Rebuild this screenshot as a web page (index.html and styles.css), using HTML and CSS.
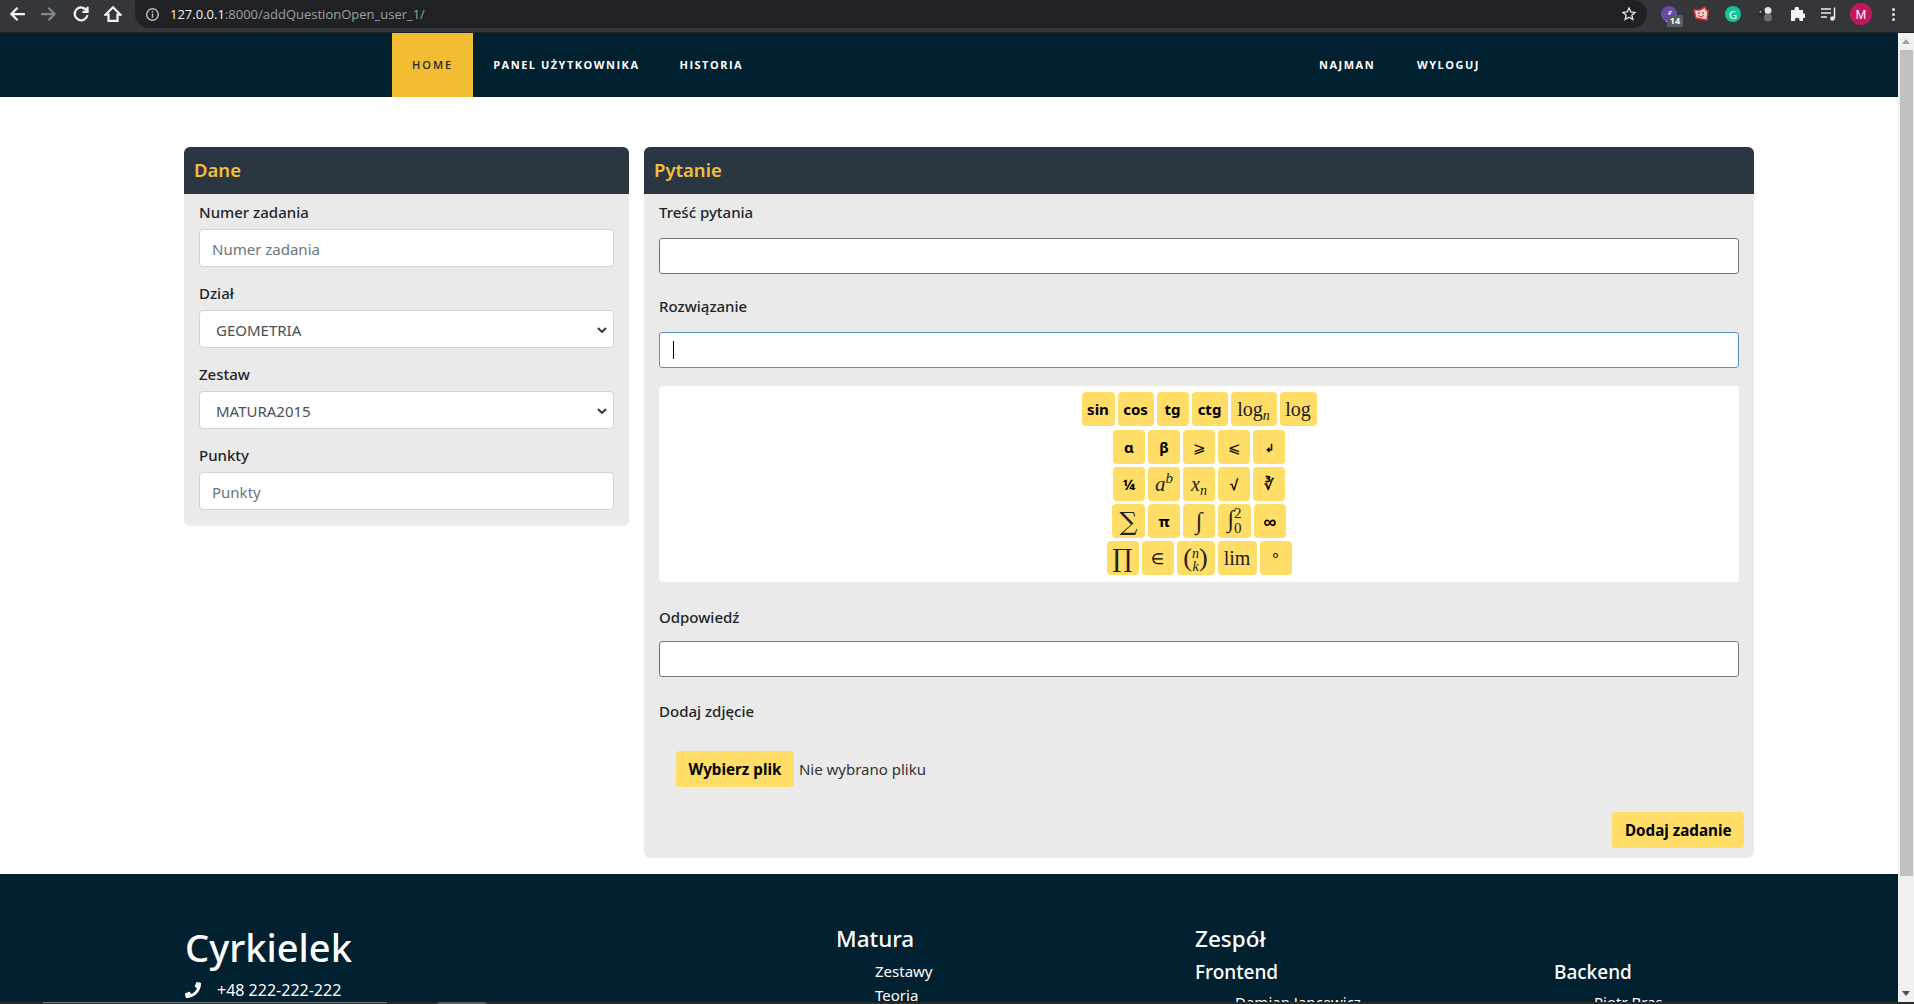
FILE: index.html
```html
<!DOCTYPE html>
<html lang="pl">
  <head>
    <meta charset="UTF-8" />
    <title>Cyrkielek - dodaj zadanie</title>
    <link rel="stylesheet" href="styles.css">
  </head>

  <body>
    <div class="browser">
      <div class="toolbar">
        <svg class="tool-icon" viewBox="0 0 16 16"><path d="M15 8H3M8.500 2.500 3 8l5.500 5.500" /></svg>
        <svg class="tool-icon tool-off" viewBox="0 0 16 16"><path d="M1 8h12M7.500 2.500 13 8l-5.500 5.500" /></svg>
        <svg class="tool-icon" viewBox="0 0 16 16"><path d="M13 5A5.700 5.700 0 1 0 13.700 9M13.800 1.500V6H9.300" /></svg>
        <svg class="tool-icon" viewBox="0 0 16 16"><path d="M8 2 1.500 8.500h2.500V14h8V8.500h2.500Z" /></svg>
        <div class="omnibox">
          <svg class="info" viewBox="0 0 16 16"><circle cx="8" cy="8" r="6.200" /><path d="M8 7v4.500M8 4.300v1.500" /></svg>
          <span class="url"><b>127.0.0.1</b>:8000/addQuestionOpen_user_1/</span>
          <svg class="star" viewBox="0 0 16 16"><path d="m8 2 1.800 4 4.200.4-3.200 2.800 1 4.300L8 11.200 4.200 13.500l1-4.300L2 6.400 6.200 6Z" /></svg>
        </div>
        <div class="extensions">
          <span class="ext ext-purple"><i>f</i><em>14</em></span>
          <svg class="ext-svg" viewBox="0 0 16 16"><path fill="#f6d5cf" stroke="#d9343c" stroke-width="1.500" d="M1 4 7 4 12 1l1 3 2 1-1 9-11-2Z" /><circle cx="6" cy="7" r="1" fill="#d9343c" /><circle cx="10" cy="7" r="1" fill="#d9343c" /><path d="M5 9.500q3 2.500 6 0" fill="none" stroke="#d9343c" /></svg>
          <span class="ext ext-green">G</span>
          <svg class="ext-svg" viewBox="0 0 16 16"><circle cx="11" cy="4.500" r="3.500" fill="#e6e6e6" /><circle cx="11" cy="11.500" r="4" fill="#6e6e6e" /><circle cx="4.500" cy="7" r="3.500" fill="#2b2b2b" /><circle cx="3.500" cy="5.800" r="1" fill="#bbb" /></svg>
          <svg class="ext-svg" viewBox="0 0 16 16"><path fill="#f1f3f4" d="M2 4h3.500V3a2.300 2.300 0 0 1 4.600 0v1H14v3.500h1a2.300 2.300 0 0 1 0 4.600h-1V15H10.500v-1a2.300 2.300 0 0 0-4.600 0v1H2Z" /></svg>
          <svg class="ext-svg" viewBox="0 0 16 16"><path fill="none" stroke="#e8eaed" stroke-width="1.500" d="M0 3h10M0 7h10M0 11h6M13.500 1.500v10.500" /><circle cx="11.500" cy="12.500" r="2.300" fill="#e8eaed" /></svg>
          <span class="avatar">M</span>
          <span class="kebab"><i></i><i></i><i></i></span>
        </div>
      </div>

      <div class="viewport">
        <div class="page">
          <nav class="nav">
            <div class="nav-group">
              <a class="nav-link nav-active">Home</a>
              <a class="nav-link">Panel użytkownika</a>
              <a class="nav-link">Historia</a>
            </div>
            <div class="nav-group nav-user">
              <a class="nav-link">Najman</a>
              <a class="nav-link">Wyloguj</a>
            </div>
          </nav>

          <main class="content">
            <section class="panel panel-side">
              <h2 class="panel-title">Dane</h2>
              <form class="panel-body side-form">
                <label class="side-label">Numer zadania</label>
                <input class="side-input" placeholder="Numer zadania" />
                <label class="side-label">Dział</label>
                <div class="side-input side-select"><span>GEOMETRIA</span><svg viewBox="0 0 10 6"><path d="m1 1 4 4 4-4" /></svg></div>
                <label class="side-label">Zestaw</label>
                <div class="side-input side-select"><span>MATURA2015</span><svg viewBox="0 0 10 6"><path d="m1 1 4 4 4-4" /></svg></div>
                <label class="side-label">Punkty</label>
                <input class="side-input" placeholder="Punkty" />
              </form>
            </section>

            <section class="panel panel-main">
              <h2 class="panel-title">Pytanie</h2>
              <form class="panel-body main-form">
                <label class="main-label">Treść pytania</label>
                <div class="main-input"></div>
                <label class="main-label">Rozwiązanie</label>
                <div class="main-input main-focus"><span class="caret"></span></div>
                <div class="math-box">
                  <div class="math-row math-row-first">
                    <button type="button" class="math-btn w33">sin</button>
                    <button type="button" class="math-btn w36">cos</button>
                    <button type="button" class="math-btn w32">tg</button>
                    <button type="button" class="math-btn w36">ctg</button>
                    <button type="button" class="math-btn tex w46">log<sub>n</sub></button>
                    <button type="button" class="math-btn tex w37">log</button>
                  </div>
                  <div class="math-row">
                    <button type="button" class="math-btn w32">α</button>
                    <button type="button" class="math-btn w32">β</button>
                    <button type="button" class="math-btn w32 thin">⩾</button>
                    <button type="button" class="math-btn w32 thin">⩽</button>
                    <button type="button" class="math-btn w32 small">↲</button>
                  </div>
                  <div class="math-row">
                    <button type="button" class="math-btn w32">¼</button>
                    <button type="button" class="math-btn tex w32 pow"><i>a</i><sup><i>b</i></sup></button>
                    <button type="button" class="math-btn tex w32"><i>x</i><sub>n</sub></button>
                    <button type="button" class="math-btn w32">√</button>
                    <button type="button" class="math-btn w32">∛</button>
                  </div>
                  <div class="math-row">
                    <button type="button" class="math-btn tex w33 big">∑</button>
                    <button type="button" class="math-btn w32">π</button>
                    <button type="button" class="math-btn tex w32 big-int"><i>∫</i></button>
                    <button type="button" class="math-btn tex w33 big-int"><i>∫</i><span class="limits"><small>2</small><small>0</small></span></button>
                    <button type="button" class="math-btn w32 large">∞</button>
                  </div>
                  <div class="math-row">
                    <button type="button" class="math-btn tex w32 big">∏</button>
                    <button type="button" class="math-btn w32 thin">∈</button>
                    <button type="button" class="math-btn tex w38 binom">(<span class="limits"><small><i>n</i></small><small><i>k</i></small></span>)</button>
                    <button type="button" class="math-btn tex w39">lim</button>
                    <button type="button" class="math-btn w32 thin">°</button>
                  </div>
                </div>
                <label class="main-label answer-label">Odpowiedź</label>
                <div class="main-input answer-input"></div>
                <label class="main-label">Dodaj zdjęcie</label>
                <div class="file-row">
                  <button type="button" class="yellow-btn">Wybierz plik</button>
                  <span>Nie wybrano pliku</span>
                </div>
                <div class="submit-row">
                  <button type="button" class="yellow-btn">Dodaj zadanie</button>
                </div>
              </form>
            </section>
          </main>

          <footer class="footer">
            <div class="footer-brand">
              <h2>Cyrkielek</h2>
              <p class="phone">
                <svg viewBox="0 0 512 512"><path d="M493 24 389 0c-11-3-23 3-27 14l-48 112c-4 10-1 21 7 28l61 50c-36 76-98 139-176 176l-50-61c-7-8-18-11-28-7L14 360c-11 5-17 17-14 28l24 104c3 11 12 20 24 20 256 0 464-207 464-464 0-12-8-21-19-24Z" /></svg>
                +48 222-222-222
              </p>
            </div>
            <div class="footer-col">
              <h3>Matura</h3>
              <ul>
                <li>Zestawy</li>
                <li>Teoria</li>
              </ul>
            </div>
            <div class="footer-team">
              <h3>Zespół</h3>
              <div class="team-grid">
                <div>
                  <h4>Frontend</h4>
                  <ul><li>Damian Jancewicz</li></ul>
                </div>
                <div>
                  <h4>Backend</h4>
                  <ul><li>Piotr Bras</li></ul>
                </div>
              </div>
            </div>
          </footer>
        </div>

        <div class="scrollbar">
          <span class="arrow-up"></span>
          <span class="thumb"></span>
          <span class="arrow-down"></span>
        </div>
      </div>
      <div class="taskbar"><span class="task task-a"></span><span class="task task-b"></span></div>
    </div>
  </body>
</html>
```

FILE: styles.css
```css
* {
  box-sizing: border-box;
}
html,
body {
  margin: 0;
  height: 100%;
  overflow: hidden;
}
body {
  background: #fff;
  color: #212529;
  font-family: "Noto Sans", "Open Sans", Arial, sans-serif;
}
.browser {
  display: flex;
  flex-direction: column;
  height: 1004px;
}

/* browser bar */
.toolbar {
  display: flex;
  align-items: center;
  height: 33px;
  flex: none;
  padding: 0 0 4px 8px;
  gap: 10px;
  border-bottom: 1px solid #202124;
  background: #35363a;
}
.tool-icon {
  width: 18px;
  height: 18px;
  margin-right: 4px;
  fill: none;
  stroke: #f1f3f4;
  stroke-width: 2;
}
.tool-off {
  stroke: #80868b;
}
.omnibox {
  display: flex;
  align-items: center;
  width: 1512px;
  height: 28px;
  margin-left: -1px;
  padding: 0 10px;
  border-radius: 0 14px 14px 14px;
  background: #202124;
}
.info {
  width: 15px;
  height: 15px;
  fill: none;
  stroke: #bdc1c6;
  stroke-width: 1.500;
}
.url {
  margin-left: 10px;
  font-family: "Open Sans", sans-serif;
  font-size: 13px;
  color: #9aa0a6;
}
.url b {
  font-weight: 400;
  color: #f1f3f4;
}
.star {
  width: 16px;
  height: 16px;
  margin-left: auto;
  fill: none;
  stroke: #e8eaed;
  stroke-width: 1.300;
}
.extensions {
  display: flex;
  align-items: center;
  gap: 16px;
  margin-left: 4px;
}
.ext {
  position: relative;
  display: flex;
  align-items: center;
  justify-content: center;
  width: 16px;
  height: 16px;
  border-radius: 50%;
  font-size: 11px;
  color: #fff;
}
.ext-purple {
  background: #6a4aa5;
}
.ext-purple em {
  position: absolute;
  left: 6px;
  top: 9px;
  width: 16px;
  height: 12px;
  border-radius: 1px;
  background: #5a5b5e;
  font-size: 9px;
  font-style: normal;
  font-weight: 700;
  line-height: 12px;
  text-align: center;
}
.ext-green {
  background: #15c39a;
}
.ext-svg {
  width: 16px;
  height: 16px;
}
.avatar {
  display: flex;
  align-items: center;
  justify-content: center;
  width: 22px;
  height: 22px;
  margin: 0 -3px;
  border-radius: 50%;
  background: #c2185b;
  color: #fff;
  font-size: 12px;
}
.kebab {
  display: flex;
  flex-direction: column;
  align-items: center;
  gap: 2px;
  width: 16px;
}
.kebab i {
  width: 3px;
  height: 3px;
  border-radius: 50%;
  background: #e8eaed;
}

/* page + scrollbar */
.viewport {
  display: flex;
  flex: 1;
  min-height: 0;
}
.page {
  flex: 1;
  min-width: 0;
  overflow: hidden;
}
.scrollbar {
  position: relative;
  flex: none;
  width: 16px;
  background: #f1f1f1;
}
.thumb {
  position: absolute;
  left: 2px;
  right: 1px;
  top: 17px;
  height: 826px;
  background: #c1c1c1;
}
.arrow-up,
.arrow-down {
  position: absolute;
  left: 4px;
  border-left: 4px solid transparent;
  border-right: 4px solid transparent;
}
.arrow-up {
  top: 6px;
  border-bottom: 5px solid #a3a3a3;
}
.arrow-down {
  bottom: 6px;
  border-top: 5px solid #505050;
}
.taskbar {
  display: flex;
  flex: none;
  height: 2px;
  background: #2a2b26;
}
.task {
  height: 2px;
}
.task-a {
  width: 344px;
  margin-left: 43px;
  border-top: 1px solid #777;
  background: #333;
}
.task-b {
  width: 48px;
  margin-left: 51px;
  background: #5a5a5a;
}

/* top nav */
.nav {
  display: flex;
  justify-content: space-between;
  height: 64px;
  padding: 0 397px 0 392px;
  background: #012030;
}
.nav-group {
  display: flex;
}
.nav-link {
  display: flex;
  align-items: center;
  padding: 0 20px 2px;
  color: #fff;
  font-family: "Open Sans", sans-serif;
  font-size: 11px;
  font-weight: 700;
  letter-spacing: 1.500px;
  text-transform: uppercase;
}
.nav-user .nav-link {
  padding: 0 21px 2px;
}
.nav-active {
  background: #f2bd33;
  color: #1f2a30;
  font-weight: 600;
  letter-spacing: 2px;
}

/* panels */
.content {
  display: flex;
  align-items: flex-start;
  gap: 15px;
  padding: 50px 144px 16px 184px;
}
.panel {
  border-radius: 6px;
  background: #eaeaea;
  overflow: hidden;
}
.panel-side {
  flex: none;
  width: 445px;
}
.panel-main {
  flex: 1;
}
.panel-title {
  height: 47px;
  margin: 0;
  padding-left: 10px;
  background: #2b3643;
  color: #f5bf3c;
  font-size: 18.500px;
  font-weight: 600;
  line-height: 46px;
}
.side-form {
  padding: 5px 15px 16px;
}
.side-label {
  display: block;
  height: 30px;
  font-size: 15px;
  font-weight: 500;
  line-height: 26px;
}
.side-input {
  display: block;
  width: 100%;
  height: 38px;
  margin-bottom: 13px;
  padding: 2px 12px 0;
  border: 1px solid #ced4da;
  border-radius: 4px;
  background: #fff;
  color: #495057;
  font-family: inherit;
  font-size: 15px;
}
.side-input::placeholder {
  color: #6c757d;
  opacity: 1;
}
.side-input:last-child {
  margin-bottom: 0;
}
.side-select {
  display: flex;
  align-items: center;
  justify-content: space-between;
  padding: 1px 6px 0 16px;
}
.side-select svg {
  width: 10px;
  height: 6px;
  fill: none;
  stroke: #343a40;
  stroke-width: 2;
}

/* question form */
.main-form {
  padding: 6px 15px 10px;
}
.main-label {
  display: block;
  height: 38px;
  font-size: 15px;
  font-weight: 500;
  line-height: 24px;
}
.main-input {
  display: flex;
  align-items: center;
  height: 36px;
  margin-bottom: 20px;
  padding-left: 13px;
  border: 1px solid #767676;
  border-radius: 3px;
  background: #fff;
}
.main-focus {
  margin-bottom: 18px;
  border-color: #5b8fc9;
}
.answer-input {
  margin-bottom: 22px;
}
.caret {
  width: 1px;
  height: 18px;
  background: #000;
}
.math-box {
  display: flex;
  flex-direction: column;
  gap: 3px;
  height: 196px;
  margin-bottom: 23px;
  padding-top: 6px;
  border-radius: 3px;
  background: #fff;
}
.math-row {
  display: flex;
  justify-content: center;
  gap: 3px;
}
.math-row-first {
  margin-bottom: 1px;
}
.math-btn {
  height: 34px;
  padding: 0;
  border: 0;
  border-radius: 4px;
  background: #ffdd67;
  color: #000;
  font-family: "Noto Sans", sans-serif;
  font-size: 15px;
  font-weight: 700;
  white-space: nowrap;
}
.w32 { width: 32px; }
.w33 { width: 33px; }
.w36 { width: 36px; }
.w37 { width: 37px; }
.w38 { width: 38px; }
.w39 { width: 39px; }
.w46 { width: 46px; }
.thin {
  font-weight: 400;
}
.small {
  font-size: 11px;
}
.large {
  font-size: 18px;
}
.tex {
  color: #222;
  font-family: "Liberation Serif", serif;
  font-size: 20px;
  font-weight: 400;
}
.tex sub,
.tex sup {
  font-size: 14px;
  line-height: 0;
}
.tex sub {
  font-style: italic;
  vertical-align: -4px;
}
.tex sup {
  vertical-align: 8px;
}
.pow i {
  font-size: 21px;
}
.pow sup i {
  font-size: 15px;
}
.big {
  font-family: "DejaVu Serif", serif;
  font-size: 25px;
}
.big-int {
  font-size: 24px;
}
.limits {
  display: inline-flex;
  flex-direction: column;
  vertical-align: middle;
  line-height: 15px;
}
.limits small {
  font-size: 15px;
}
.binom {
  font-size: 26px;
}
.binom .limits {
  line-height: 13px;
}
.binom .limits small {
  font-size: 14px;
}
.answer-label {
  height: 36px;
}
.file-row {
  display: flex;
  align-items: center;
  gap: 5px;
  margin: 14px 0 25px 17px;
  font-size: 15px;
  color: #333;
}
.yellow-btn {
  height: 36px;
  padding: 0 12.500px;
  border: 0;
  border-radius: 4px;
  background: #ffdd67;
  color: #000;
  font-family: "Noto Sans", sans-serif;
  font-size: 15.200px;
  font-weight: 700;
}
.submit-row {
  display: flex;
  justify-content: flex-end;
  margin-right: -5px;
}

/* footer */
.footer {
  display: grid;
  grid-template-columns: 651px 359px 1fr;
  height: 180px;
  padding: 43px 0 0 185px;
  background: #012030;
  color: #fff;
}
.footer h2 {
  margin: 2px 0 0;
  font-size: 38px;
  font-weight: 500;
  line-height: 56px;
}
.phone {
  display: flex;
  align-items: center;
  gap: 16px;
  margin: 4px 0 0;
  font-size: 16px;
}
.phone svg {
  flex: none;
  width: 16px;
  height: 16px;
  fill: #fff;
}
.footer h3 {
  margin: 6px 0 0;
  font-size: 22.500px;
  font-weight: 500;
  line-height: 32px;
}
.footer h4 {
  margin: 0;
  font-size: 19px;
  font-weight: 500;
  line-height: 30px;
}
.footer ul {
  margin: 0;
  padding: 0 0 0 39px;
  list-style: none;
  font-size: 15px;
  line-height: 24px;
}
.footer-col ul {
  margin-top: 4px;
}
.team-grid {
  display: grid;
  grid-template-columns: 359px 1fr;
  margin-top: 2px;
}
.team-grid ul {
  padding-left: 40px;
  margin-top: 3px;
}
```
